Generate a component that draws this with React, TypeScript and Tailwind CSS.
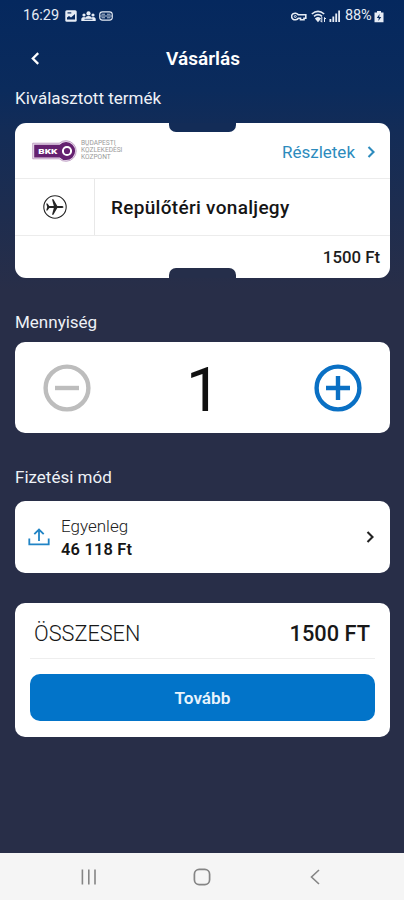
import type { ReactNode } from 'react';
import { useState } from 'react';

function Chevron({ className, left = false }: { className: string; left?: boolean }) {
  return (
    <svg viewBox="0 0 8 12" className={className} fill="none" stroke="currentColor" strokeWidth="2.1">
      <path d={left ? 'M6.5 1 1.5 6l5 5' : 'M1.5 1l5 5-5 5'} />
    </svg>
  );
}

function StatusBar() {
  return (
    <div className="flex h-8 items-center justify-between pl-[23px] pr-[20px] text-[#e6ecf5]">
      <div className="flex items-center">
        <span className="w-[37px] whitespace-nowrap text-[14.5px]">16:29</span>
        <svg viewBox="0 0 12 12" className="ml-[5px] h-3 w-3">
          <rect x="0.3" y="0.3" width="11.4" height="11.4" rx="1.5" fill="currentColor" />
          <path d="M2 9.5V7.5l2-1.6 2 1.6L10 4v5.5z" fill="#05285e" />
          <path d="M2.5 2.3h3.8v1.2H2.5z" fill="#05285e" />
        </svg>
        <svg viewBox="0 0 15 11" className="ml-[4px] h-[11px] w-[15px]" fill="currentColor">
          <circle cx="7.5" cy="2.4" r="2.1" />
          <circle cx="3" cy="4" r="1.6" />
          <circle cx="12" cy="4" r="1.6" />
          <path d="M0.3 10V7.8Q0.5 6 3 6l1.5.4Q5.5 5 7.5 5t3 1.4L12 6q2.5 0 2.7 1.8V10z" />
          <path d="M3.5 8.3h8" stroke="#3c5a88" />
        </svg>
        <svg viewBox="0 0 14 10" className="ml-[3px] h-[10px] w-[14px]" fill="none" stroke="currentColor">
          <rect x="0.7" y="0.9" width="12.6" height="8.2" rx="2.8" strokeWidth="1.1" />
          <path d="M2.5 3.2h3.5M8 3.2h3.5M2.5 6.8h3.5M8 6.8h3.5M1 5h12" strokeWidth="0.8" />
        </svg>
      </div>
      <div className="flex items-center">
        <svg viewBox="0 0 16 9" className="h-[9px] w-4" fill="none" stroke="currentColor">
          <path d="M7.3 2.8A3.6 3.3 0 1 0 7.3 6.2H9.5V7.7H13V6.2H14.8V2.8z" strokeWidth="1.6" />
          <circle cx="4.3" cy="4.5" r="1" strokeWidth="1" />
        </svg>
        <svg viewBox="0 0 16 13" className="ml-[4px] h-[13px] w-4" fill="none" stroke="currentColor" strokeWidth="1.6">
          <path d="M0.8 4Q7 -1.4 13.2 4" />
          <path d="M3 6.4Q7 3 11 6.4" />
          <path d="M5 8.7Q7 7 9 8.7L7 11z" fill="currentColor" />
          <path d="M10.8 7v5M9.3 10.5l1.5 1.8M13.5 12V7.5m0 0L15 9" strokeWidth="1" />
        </svg>
        <svg viewBox="0 0 12 12" className="ml-[2px] h-3 w-3" fill="currentColor">
          <path d="M0.5 9h1.8v3H.5zM3.4 6.5h1.8V12H3.4zM6.3 3.5h1.8V12H6.3z" />
          <path d="M9.2.5H11V12H9.2z" />
        </svg>
        <span className="ml-[4px] w-[29px] whitespace-nowrap text-[14.5px] tracking-[-0.1px]">88%</span>
        <svg viewBox="0 0 10 13" className="h-[13px] w-[10px]">
          <path d="M3 1h4v1.5h2.5V12.3h-9V2.5H3z" fill="currentColor" />
          <path d="M5.6 4 2.8 8h2L4.3 11l3-4H5.2z" fill="#05285e" />
        </svg>
      </div>
    </div>
  );
}

function BkkLogo() {
  return (
    <div className="flex items-center">
      <svg viewBox="0 0 45 22" className="h-[22px] w-[45px]">
        <path d="M.7 3.2h26.5a10.3 10.3 0 1 1 0 15.6H.7z" fill="#eadcec" stroke="#b592bb" strokeWidth="0.8" />
        <path d="M2.2 4.8h25.5a9 9 0 1 1 0 12.6H2.2z" fill="#652170" />
        <circle cx="35" cy="11" r="4.1" fill="none" stroke="#fff" strokeWidth="2" />
        <text x="6.3" y="13.7" textLength="19" lengthAdjust="spacingAndGlyphs" fill="#fff" fontSize="7.6" fontWeight="900">
          BKK
        </text>
      </svg>
      <div className="ml-[4px] whitespace-nowrap text-[6.6px] leading-[7px] text-[#9a9a9a]">
        <div>BUDAPESTI</div>
        <div>KÖZLEKEDÉSI</div>
        <div>KÖZPONT</div>
      </div>
    </div>
  );
}

function PlaneIcon() {
  return (
    <svg viewBox="0 0 24 24" className="h-6 w-6">
      <circle cx="12" cy="12" r="11.2" fill="none" stroke="#252525" strokeWidth="1.1" />
      <path
        d="M20.5 12c0-.7-.9-1.1-2-1.1h-4.2L10.4 4.3H9l1.8 6.6H6.3L4.5 8.6H3.2L4.2 12l-1 3.4h1.3l1.8-2.3h4.5L9 19.7h1.4l3.9-6.6h4.2c1.1 0 2-.4 2-1.1z"
        fill="#252525"
      />
    </svg>
  );
}

function Label({ children, className }: { children: ReactNode; className: string }) {
  return <h2 className={`pl-[15px] text-[17px] font-normal leading-5 text-[#eef1f6] ${className}`}>{children}</h2>;
}

function TicketCard() {
  return (
    <section className="relative mx-[15px] mt-[15px] h-[155px] w-[375px] overflow-hidden rounded-[11px] bg-white">
      <div className="flex h-[56px] items-center justify-between border-b border-[#ececec] pl-[17px] pr-[15px]">
        <BkkLogo />
        <button type="button" className="flex items-center pt-[4px] text-[17px] text-[#2d8bbd]">
          <span>Részletek</span>
          <Chevron className="mb-[2px] ml-[12px] h-[12px] w-[8px]" />
        </button>
      </div>
      <div className="flex h-[57px] border-b border-[#ececec]">
        <div className="flex w-[80px] items-center justify-center border-r border-[#e8e8e8]">
          <PlaneIcon />
        </div>
        <div className="flex items-center pl-[16px] pt-[2px] text-[19px] font-medium tracking-[0.3px] text-[#151515]">
          Repülőtéri vonaljegy
        </div>
      </div>
      <div className="flex h-[42px] items-center justify-end pr-[10px] pt-[2px] text-[16.8px] font-medium text-[#1c1c1c]">
        1500 Ft
      </div>
      <div className="absolute left-[154px] top-0 h-[9px] w-[67px] rounded-b-[7px] bg-[#132c57]" />
      <div className="absolute bottom-0 left-[154px] h-[10px] w-[67px] rounded-t-[7px] bg-[#252e4a]" />
    </section>
  );
}

function RoundButton({ sign, onClick }: { sign: 'minus' | 'plus'; onClick: () => void }) {
  const isPlus = sign === 'plus';
  return (
    <button type="button" onClick={onClick} className={isPlus ? 'text-[#0a70c4]' : 'text-[#bdbdbd]'}>
      <svg viewBox="0 0 48 48" className="h-12 w-12" fill="none" stroke="currentColor" strokeWidth="4.4">
        <circle cx="24" cy="24" r="21.4" />
        <path d={isPlus ? 'M12 24h24M24 12v24' : 'M12 24h24'} />
      </svg>
    </button>
  );
}

function NavBar() {
  return (
    <nav className="flex h-[47px] items-center bg-[#f5f5f5] text-[#858585]">
      <svg viewBox="0 0 16 16" className="ml-[81px] h-4 w-4" stroke="currentColor" strokeWidth="1.6">
        <path d="M1.4 .5v15M7.8 .5v15M14 .5v15" />
      </svg>
      <svg viewBox="0 0 18 18" className="ml-[96px] h-[18px] w-[18px]" fill="none" stroke="currentColor" strokeWidth="1.7">
        <rect x="1.4" y="1.4" width="15.2" height="15.2" rx="4.8" />
      </svg>
      <svg viewBox="0 0 10 16" className="ml-[99px] h-4 w-[10px]" fill="none" stroke="currentColor" strokeWidth="1.6">
        <path d="M9 1 1.5 8 9 15" />
      </svg>
    </nav>
  );
}

export default function App() {
  const [count, setCount] = useState(1);
  const price = 1500 * count;

  return (
    <div className="flex h-[900px] w-[404px] flex-col overflow-hidden bg-[#282e48] font-['Roboto',sans-serif]">
      <main className="flex-1 bg-[linear-gradient(180deg,#05285e_0px,#0b2b5c_90px,#132c57_130px,#282e48_290px)]">
        <StatusBar />
        <header className="flex h-[54px] items-center pl-[31px] text-white">
          <Chevron left className="mb-[2px] h-[13px] w-[9px]" />
          <h1 className="flex-1 pr-[38px] text-center text-[19px] font-semibold">Vásárlás</h1>
        </header>

        <Label className="mt-[2px]">Kiválasztott termék</Label>
        <TicketCard />

        <Label className="mt-[34px]">Mennyiség</Label>
        <section className="mx-[15px] mt-[10px] flex h-[91px] w-[375px] items-center justify-between rounded-[10px] bg-white px-[28px]">
          <RoundButton sign="minus" onClick={() => setCount(Math.max(1, count - 1))} />
          <span className="pl-[2px] pt-[5px] text-[62px] font-normal leading-none text-[#111111]">{count}</span>
          <RoundButton sign="plus" onClick={() => setCount(count + 1)} />
        </section>

        <Label className="mt-[34px]">Fizetési mód</Label>
        <section className="mx-[15px] mt-[14px] flex h-[72px] w-[375px] items-center rounded-[10px] bg-white pl-[13px] pr-[16px]">
          <svg viewBox="0 0 22 18" className="h-[18px] w-[22px] text-[#2184c5]" fill="none" stroke="currentColor" strokeWidth="1.8">
            <path d="M1.3 10.5v5.8h19.4v-5.8M11 13V2M6.3 6.2 11 1.5l4.7 4.7" />
          </svg>
          <div className="ml-[11px] flex-1 pt-[2px] leading-[23px]">
            <div className="text-[17px] font-light text-[#222222]">Egyenleg</div>
            <div className="text-[16.4px] font-semibold tracking-[0.2px] text-[#151515]">46 118 Ft</div>
          </div>
          <Chevron className="h-[12px] w-[8px] text-[#222222]" />
        </section>

        <section className="mx-[15px] mt-[30px] h-[134px] w-[375px] rounded-[10px] bg-white px-[15px]">
          <div className="flex h-[56px] items-center justify-between border-b border-[#eeeeee] pl-[4px] pr-[5px] pt-[8px] text-[22px] text-[#181818]">
            <span className="text-[21.7px] font-light">ÖSSZESEN</span>
            <span className="text-[21.8px] font-medium">{price} FT</span>
          </div>
          <button type="button" className="mt-[15px] h-[47px] w-full rounded-[10px] bg-[#0274c9] pt-[2px] text-[17.2px] font-semibold text-[#e8f3fc]">
            Tovább
          </button>
        </section>
      </main>
      <NavBar />
    </div>
  );
}
